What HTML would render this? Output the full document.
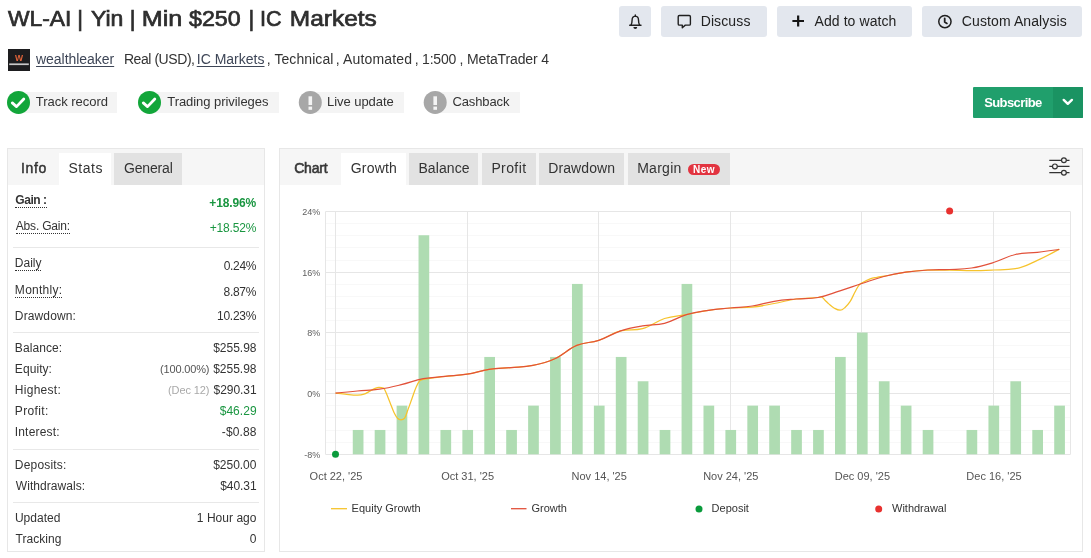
<!DOCTYPE html>
<html lang="en"><head><meta charset="utf-8"><title>WL-AI | Yin | Min $250 | IC Markets</title>
<style>
html,body{margin:0;padding:0;background:#fff;}
body{width:1091px;height:558px;position:relative;overflow:hidden;font-family:"Liberation Sans",sans-serif;}
.t{position:absolute;white-space:nowrap;}
.dot{padding-bottom:1px;border-bottom:1px dotted #333;}
.b{position:absolute;box-sizing:border-box;}
.btn{background:#e3e7ee;border-radius:3px;}
.panel{border:1px solid #e7e7e7;background:#fff;}
.hd{background:#f6f6f6;}
.tab{background:#e2e2e2;}
.lbl{background:#f4f4f4;}
.sep{background:#e8e8e8;height:1px;}
svg{position:absolute;left:0;top:0;}
</style></head><body>
<!-- top buttons -->
<div class="b btn" style="left:619px;top:6px;width:32px;height:31px;"></div>
<div class="b btn" style="left:661px;top:6px;width:106px;height:31px;"></div>
<div class="b btn" style="left:777px;top:6px;width:135px;height:31px;"></div>
<div class="b btn" style="left:922px;top:6px;width:160px;height:31px;"></div>
<div class="b" style="left:973px;top:87px;width:110px;height:31px;background:#209f6c;border-radius:1px;"></div>
<div class="b" style="left:1053px;top:87px;width:30px;height:31px;background:#1a9362;border-radius:0 1px 1px 0;"></div>
<!-- avatar -->
<div class="b" style="left:8px;top:49px;width:22px;height:22px;background:#1d1d1f;"></div>
<!-- badges labels -->
<div class="b lbl" style="left:18px;top:91.5px;width:99px;height:21.5px;"></div>
<div class="b lbl" style="left:149px;top:91.5px;width:129.7px;height:21.5px;"></div>
<div class="b lbl" style="left:310px;top:91.5px;width:93.7px;height:21.5px;"></div>
<div class="b lbl" style="left:435px;top:91.5px;width:84.5px;height:21.5px;"></div>
<!-- panels -->
<div class="b panel" style="left:7px;top:148px;width:258px;height:404px;"></div>
<div class="b hd" style="left:8px;top:149px;width:256px;height:35.7px;"></div>
<div class="b" style="left:58.7px;top:152.7px;width:52.3px;height:32.3px;background:#fff;"></div>
<div class="b tab" style="left:114px;top:152.7px;width:68px;height:32px;"></div>
<div class="b sep" style="left:13px;top:247px;width:246px;"></div>
<div class="b sep" style="left:13px;top:332px;width:246px;"></div>
<div class="b sep" style="left:13px;top:449px;width:246px;"></div>
<div class="b sep" style="left:13px;top:502px;width:246px;"></div>

<div class="b panel" style="left:279px;top:148px;width:804px;height:404px;"></div>
<div class="b hd" style="left:280px;top:149px;width:802px;height:35.7px;"></div>
<div class="b" style="left:341.3px;top:152.7px;width:64.7px;height:32.3px;background:#fff;"></div>
<div class="b tab" style="left:409px;top:152.7px;width:69.3px;height:32px;"></div>
<div class="b tab" style="left:482px;top:152.7px;width:53.5px;height:32px;"></div>
<div class="b tab" style="left:539.3px;top:152.7px;width:85.2px;height:32px;"></div>
<div class="b tab" style="left:628px;top:152.7px;width:101.8px;height:32px;"></div>
<div class="b" style="left:687.8px;top:164px;width:32.2px;height:11.2px;background:#e23440;border-radius:6px;"></div>

<svg width="1091" height="558" viewBox="0 0 1091 558">
<line x1="325.5" x2="1070.5" y1="211.50" y2="211.50" stroke="#e6e6e6" stroke-width="1"/>
<line x1="325.5" x2="1070.5" y1="223.50" y2="223.50" stroke="#f8f8f8" stroke-width="1"/>
<line x1="325.5" x2="1070.5" y1="235.50" y2="235.50" stroke="#f8f8f8" stroke-width="1"/>
<line x1="325.5" x2="1070.5" y1="247.50" y2="247.50" stroke="#f8f8f8" stroke-width="1"/>
<line x1="325.5" x2="1070.5" y1="260.50" y2="260.50" stroke="#f8f8f8" stroke-width="1"/>
<line x1="325.5" x2="1070.5" y1="272.50" y2="272.50" stroke="#e6e6e6" stroke-width="1"/>
<line x1="325.5" x2="1070.5" y1="284.50" y2="284.50" stroke="#f8f8f8" stroke-width="1"/>
<line x1="325.5" x2="1070.5" y1="296.50" y2="296.50" stroke="#f8f8f8" stroke-width="1"/>
<line x1="325.5" x2="1070.5" y1="308.50" y2="308.50" stroke="#f8f8f8" stroke-width="1"/>
<line x1="325.5" x2="1070.5" y1="320.50" y2="320.50" stroke="#f8f8f8" stroke-width="1"/>
<line x1="325.5" x2="1070.5" y1="332.50" y2="332.50" stroke="#e6e6e6" stroke-width="1"/>
<line x1="325.5" x2="1070.5" y1="345.50" y2="345.50" stroke="#f8f8f8" stroke-width="1"/>
<line x1="325.5" x2="1070.5" y1="357.50" y2="357.50" stroke="#f8f8f8" stroke-width="1"/>
<line x1="325.5" x2="1070.5" y1="369.50" y2="369.50" stroke="#f8f8f8" stroke-width="1"/>
<line x1="325.5" x2="1070.5" y1="381.50" y2="381.50" stroke="#f8f8f8" stroke-width="1"/>
<line x1="325.5" x2="1070.5" y1="393.50" y2="393.50" stroke="#e6e6e6" stroke-width="1"/>
<line x1="325.5" x2="1070.5" y1="405.50" y2="405.50" stroke="#f8f8f8" stroke-width="1"/>
<line x1="325.5" x2="1070.5" y1="417.50" y2="417.50" stroke="#f8f8f8" stroke-width="1"/>
<line x1="325.5" x2="1070.5" y1="430.50" y2="430.50" stroke="#f8f8f8" stroke-width="1"/>
<line x1="325.5" x2="1070.5" y1="442.50" y2="442.50" stroke="#f8f8f8" stroke-width="1"/>
<line x1="325.5" x2="1070.5" y1="454.50" y2="454.50" stroke="#e6e6e6" stroke-width="1"/>
<line x1="335.50" x2="335.50" y1="211.5" y2="454.3" stroke="#e6e6e6" stroke-width="1"/>
<line x1="467.50" x2="467.50" y1="211.5" y2="454.3" stroke="#e6e6e6" stroke-width="1"/>
<line x1="598.50" x2="598.50" y1="211.5" y2="454.3" stroke="#e6e6e6" stroke-width="1"/>
<line x1="730.50" x2="730.50" y1="211.5" y2="454.3" stroke="#e6e6e6" stroke-width="1"/>
<line x1="861.50" x2="861.50" y1="211.5" y2="454.3" stroke="#e6e6e6" stroke-width="1"/>
<line x1="993.50" x2="993.50" y1="211.5" y2="454.3" stroke="#e6e6e6" stroke-width="1"/>
<line x1="325.5" x2="325.5" y1="211.5" y2="454.3" stroke="#e6e6e6" stroke-width="1"/>
<line x1="1070.5" x2="1070.5" y1="211.5" y2="454.3" stroke="#e6e6e6" stroke-width="1"/>
<rect x="352.77" y="429.96" width="10.7" height="24.34" fill="#afdcb2"/>
<rect x="374.69" y="429.96" width="10.7" height="24.34" fill="#afdcb2"/>
<rect x="396.61" y="405.62" width="10.7" height="48.68" fill="#afdcb2"/>
<rect x="418.53" y="235.24" width="10.7" height="219.06" fill="#afdcb2"/>
<rect x="440.45" y="429.96" width="10.7" height="24.34" fill="#afdcb2"/>
<rect x="462.37" y="429.96" width="10.7" height="24.34" fill="#afdcb2"/>
<rect x="484.29" y="356.94" width="10.7" height="97.36" fill="#afdcb2"/>
<rect x="506.21" y="429.96" width="10.7" height="24.34" fill="#afdcb2"/>
<rect x="528.13" y="405.62" width="10.7" height="48.68" fill="#afdcb2"/>
<rect x="550.05" y="356.94" width="10.7" height="97.36" fill="#afdcb2"/>
<rect x="571.97" y="283.92" width="10.7" height="170.38" fill="#afdcb2"/>
<rect x="593.89" y="405.62" width="10.7" height="48.68" fill="#afdcb2"/>
<rect x="615.81" y="356.94" width="10.7" height="97.36" fill="#afdcb2"/>
<rect x="637.73" y="381.28" width="10.7" height="73.02" fill="#afdcb2"/>
<rect x="659.65" y="429.96" width="10.7" height="24.34" fill="#afdcb2"/>
<rect x="681.57" y="283.92" width="10.7" height="170.38" fill="#afdcb2"/>
<rect x="703.49" y="405.62" width="10.7" height="48.68" fill="#afdcb2"/>
<rect x="725.41" y="429.96" width="10.7" height="24.34" fill="#afdcb2"/>
<rect x="747.33" y="405.62" width="10.7" height="48.68" fill="#afdcb2"/>
<rect x="769.25" y="405.62" width="10.7" height="48.68" fill="#afdcb2"/>
<rect x="791.17" y="429.96" width="10.7" height="24.34" fill="#afdcb2"/>
<rect x="813.09" y="429.96" width="10.7" height="24.34" fill="#afdcb2"/>
<rect x="835.01" y="356.94" width="10.7" height="97.36" fill="#afdcb2"/>
<rect x="856.93" y="332.60" width="10.7" height="121.70" fill="#afdcb2"/>
<rect x="878.85" y="381.28" width="10.7" height="73.02" fill="#afdcb2"/>
<rect x="900.77" y="405.62" width="10.7" height="48.68" fill="#afdcb2"/>
<rect x="922.69" y="429.96" width="10.7" height="24.34" fill="#afdcb2"/>
<rect x="966.53" y="429.96" width="10.7" height="24.34" fill="#afdcb2"/>
<rect x="988.45" y="405.62" width="10.7" height="48.68" fill="#afdcb2"/>
<rect x="1010.37" y="381.28" width="10.7" height="73.02" fill="#afdcb2"/>
<rect x="1032.29" y="429.96" width="10.7" height="24.34" fill="#afdcb2"/>
<rect x="1054.21" y="405.62" width="10.7" height="48.68" fill="#afdcb2"/>
<path d="M335.50,393.20C335.50,393.20 341.20,393.87 345.00,394.20C350.04,394.63 352.56,395.10 357.60,395.10C360.16,395.10 361.44,394.99 364.00,394.20C366.00,393.59 367.00,392.66 369.00,391.60C371.00,390.54 372.00,389.76 374.00,388.90C376.00,388.04 377.00,387.30 379.00,387.30C380.80,387.30 381.70,387.30 383.50,388.00C384.50,388.70 385.00,390.27 386.00,392.50C387.60,396.07 388.40,398.50 390.00,402.50C391.60,406.50 392.40,409.13 394.00,412.50C395.40,415.45 396.10,416.84 397.50,418.30C398.90,419.76 399.60,419.80 401.00,419.80C402.40,419.80 403.10,419.80 404.50,418.30C405.90,416.80 406.60,413.20 408.00,409.50C409.60,405.28 410.40,402.90 412.00,398.50C413.60,394.10 414.40,391.23 416.00,387.50C417.40,384.23 418.10,382.60 419.50,381.00C420.99,379.40 421.74,379.67 423.23,379.40C432.01,377.83 436.39,377.44 445.16,376.40C453.94,375.36 458.32,375.60 467.10,374.20C475.87,372.80 480.26,370.72 489.03,369.40C497.80,368.08 502.19,368.40 510.96,367.60C519.74,366.80 524.12,367.18 532.90,365.40C541.67,363.62 546.06,362.70 554.83,358.70C563.60,354.70 567.99,349.06 576.76,345.40C585.54,341.74 589.92,343.30 598.70,340.40C607.47,337.50 611.86,333.20 620.63,330.90C629.40,328.60 633.79,330.90 642.56,328.60C651.34,326.30 655.72,321.30 664.50,318.50C673.27,315.70 677.65,316.24 686.43,314.60C695.20,312.96 699.59,311.62 708.36,310.30C717.13,308.98 721.52,308.62 730.29,308.00C739.07,307.38 743.45,308.00 752.23,307.20C761.00,306.40 765.39,305.14 774.16,303.50C782.93,301.86 787.32,300.20 796.09,299.00C804.87,297.80 809.25,298.27 818.03,297.50C819.34,297.39 819.99,296.80 821.30,296.80C822.78,296.80 823.52,298.80 825.00,300.20C826.52,301.64 827.28,302.58 828.80,303.90C830.88,305.70 831.92,306.84 834.00,308.00C836.44,309.36 837.66,310.20 840.10,310.20C842.06,310.20 843.04,309.21 845.00,307.50C847.08,305.69 848.12,304.62 850.20,301.40C852.12,298.42 853.08,295.55 855.00,292.00C856.56,289.11 857.34,287.26 858.90,285.30C860.34,283.50 861.06,283.43 862.50,282.60C865.58,280.83 867.12,279.93 870.20,278.80C872.92,277.81 874.28,277.81 877.00,277.30C879.88,276.77 881.32,276.71 884.20,276.20C892.82,274.67 897.13,273.43 905.76,272.20C914.53,270.95 918.92,270.00 927.69,270.00C936.46,270.00 940.85,270.00 949.62,270.00C958.40,270.00 962.78,270.60 971.56,270.60C980.33,270.60 984.72,270.38 993.49,270.00C1002.26,269.62 1006.65,270.00 1015.42,268.70C1024.20,267.40 1028.58,264.32 1037.36,260.40C1046.13,256.48 1059.29,249.10 1059.29,249.10" fill="none" stroke="#f6c32c" stroke-width="1.25"/>
<path d="M335.50,393.20C335.50,393.20 348.66,391.80 357.43,391.00C366.21,390.20 370.59,390.46 379.37,389.20C388.14,387.94 392.53,386.80 401.30,384.70C410.07,382.60 414.46,380.36 423.23,378.70C432.01,377.04 436.39,377.30 445.16,376.40C453.94,375.50 458.32,375.60 467.10,374.20C475.87,372.80 480.26,370.72 489.03,369.40C497.80,368.08 502.19,368.40 510.96,367.60C519.74,366.80 524.12,367.18 532.90,365.40C541.67,363.62 546.06,362.70 554.83,358.70C563.60,354.70 567.99,349.06 576.76,345.40C585.54,341.74 589.92,343.30 598.70,340.40C607.47,337.50 611.86,333.80 620.63,330.90C629.40,328.00 633.79,327.42 642.56,325.90C651.34,324.38 655.72,325.56 664.50,323.30C673.27,321.04 677.65,317.20 686.43,314.60C695.20,312.00 699.59,311.62 708.36,310.30C717.13,308.98 721.52,308.86 730.29,308.00C739.07,307.14 743.45,307.34 752.23,306.00C761.00,304.66 765.39,302.70 774.16,301.30C782.93,299.90 787.32,299.76 796.09,299.00C804.87,298.24 809.25,299.00 818.03,297.50C826.80,296.00 831.19,293.60 839.96,290.80C848.73,288.00 853.12,286.36 861.89,283.50C870.67,280.64 875.05,278.76 883.83,276.50C892.60,274.24 896.98,273.50 905.76,272.20C914.53,270.90 918.92,270.50 927.69,270.00C936.46,269.50 940.85,269.90 949.62,269.50C958.40,269.10 962.78,269.40 971.56,268.00C980.33,266.60 984.72,265.20 993.49,262.50C1002.26,259.80 1006.65,256.54 1015.42,254.50C1024.20,252.46 1028.58,253.30 1037.36,252.30C1046.13,251.30 1059.29,249.50 1059.29,249.50" fill="none" stroke="#e2513a" stroke-width="1.25"/>
<circle cx="335.5" cy="454.3" r="3.5" fill="#0a9b3c"/>
<circle cx="949.624" cy="211.0" r="3.5" fill="#e8312f"/>
<line x1="331" x2="347" y1="508.7" y2="508.7" stroke="#f6c32c" stroke-width="1.3"/>
<line x1="511" x2="526.5" y1="508.7" y2="508.7" stroke="#e2513a" stroke-width="1.3"/>
<circle cx="699" cy="509" r="3.5" fill="#0a9b3c"/>
<circle cx="878.7" cy="509" r="3.5" fill="#e8312f"/>
<!-- bell -->
<g fill="none" stroke="#1f1f1f" stroke-width="1.4" stroke-linecap="round" stroke-linejoin="round">
<path d="M629.7,25.2 H641.0 M630.9,25.2 C632.0,23.4 632.1,21.6 632.1,19.9 C632.1,17.7 633.3,16.3 635.3,16.1 C637.3,16.3 638.5,17.7 638.5,19.9 C638.5,21.6 638.6,23.4 639.7,25.2 M635.3,15.0 V16.0"/>
<path d="M633.4,27.0 H637.2 A1.9,1.9 0 0 1 633.4,27.0 Z" fill="#1f1f1f" stroke="none"/>
<!-- discuss bubble -->
<path d="M679.4,15.5 H689.2 Q690.4,15.5 690.4,16.7 V23.9 Q690.4,25.1 689.2,25.1 H685.3 L682.3,27.7 V25.1 H679.4 Q678.2,25.1 678.2,23.9 V16.7 Q678.2,15.5 679.4,15.5 Z"/>
<!-- clock -->
<circle cx="944.9" cy="21.55" r="6.15" stroke-width="1.5"/>
<path d="M944.7,18.3 V22.0 L946.9,23.4" stroke-width="1.8"/>
</g>
<!-- plus -->
<path d="M792.4,21.0 H804.0 M798.15,15.4 V26.6" stroke="#151515" stroke-width="2.2" fill="none"/>
<!-- chevron -->
<path d="M1063.7,99.9 L1067.8,103.8 L1071.9,99.9" stroke="#fff" stroke-width="2.4" fill="none" stroke-linecap="round" stroke-linejoin="round"/>
<!-- badges -->
<circle cx="18.5" cy="102.4" r="11.5" fill="#12a63a"/>
<path d="M12.3,102.9 L16.5,106.6 L23.8,99.0" stroke="#fff" stroke-width="2.8" fill="none" stroke-linecap="round" stroke-linejoin="round"/>
<circle cx="149.5" cy="102.4" r="11.5" fill="#12a63a"/>
<path d="M143.3,102.9 L147.5,106.6 L154.8,99.0" stroke="#fff" stroke-width="2.8" fill="none" stroke-linecap="round" stroke-linejoin="round"/>
<circle cx="310.3" cy="102.4" r="11.5" fill="#a7a7a7"/>
<rect x="308.5" y="96.3" width="3.6" height="8.7" fill="#f4f4f4"/><rect x="308.5" y="106.6" width="3.6" height="3.2" fill="#f4f4f4"/>
<circle cx="435.2" cy="102.4" r="11.5" fill="#a7a7a7"/>
<rect x="433.4" y="96.3" width="3.6" height="8.7" fill="#f4f4f4"/><rect x="433.4" y="106.6" width="3.6" height="3.2" fill="#f4f4f4"/>
<!-- settings icon -->
<g stroke="#333" stroke-width="1.2" fill="#f5f5f5">
<path d="M1049.3,160.3 H1069.5 M1049.3,166.4 H1069.5 M1049.3,172.7 H1069.5" fill="none"/>
<circle cx="1063.9" cy="160.3" r="2.4"/>
<circle cx="1054.9" cy="166.4" r="2.4"/>
<circle cx="1063.9" cy="172.7" r="2.4"/>
</g>
<!-- avatar details -->
<rect x="9.2" y="63.4" width="19.6" height="1.7" fill="#e8e8e8" opacity="0.85"/>

</svg>
<div id="tx" style="position:absolute;left:0;top:0;width:1091px;height:558px;will-change:transform;">
<span class="t" id="t0" style="font-size:22px;line-height:22px;top:8.00px;color:#2e2e2e;left:7.99px;transform-origin:0.06px 0;transform:scaleX(1.0379);-webkit-text-stroke:0.7px #2e2e2e;">WL-AI</span>
<span class="t" id="t1" style="font-size:22px;line-height:22px;top:8.00px;color:#2e2e2e;left:77.21px;-webkit-text-stroke:0.7px #2e2e2e;">|</span>
<span class="t" id="t2" style="font-size:22px;line-height:22px;top:8.00px;color:#2e2e2e;left:91.21px;transform-origin:0.44px 0;transform:scaleX(1.0472);-webkit-text-stroke:0.7px #2e2e2e;">Yin</span>
<span class="t" id="t3" style="font-size:22px;line-height:22px;top:8.00px;color:#2e2e2e;left:129.71px;-webkit-text-stroke:0.7px #2e2e2e;">|</span>
<span class="t" id="t4" style="font-size:22px;line-height:22px;top:8.00px;color:#2e2e2e;left:141.60px;transform-origin:1.75px 0;transform:scaleX(1.1442);-webkit-text-stroke:0.7px #2e2e2e;">Min</span>
<span class="t" id="t5" style="font-size:22px;line-height:22px;top:8.00px;color:#2e2e2e;left:189.36px;transform-origin:0.19px 0;transform:scaleX(1.0555);-webkit-text-stroke:0.7px #2e2e2e;">$250</span>
<span class="t" id="t6" style="font-size:22px;line-height:22px;top:8.00px;color:#2e2e2e;left:248.61px;-webkit-text-stroke:0.7px #2e2e2e;">|</span>
<span class="t" id="t7" style="font-size:22px;line-height:22px;top:8.00px;color:#2e2e2e;left:260.25px;transform-origin:2.00px 0;transform:scaleX(0.9798);-webkit-text-stroke:0.7px #2e2e2e;">IC</span>
<span class="t" id="t8" style="font-size:22px;line-height:22px;top:8.00px;color:#2e2e2e;left:289.50px;transform-origin:1.75px 0;transform:scaleX(1.1116);-webkit-text-stroke:0.7px #2e2e2e;">Markets</span>
<span class="t" id="t9" style="font-size:14px;line-height:14px;top:52.01px;color:#3e4657;letter-spacing:-0.040px;left:36.06px;text-decoration:underline;text-underline-offset:2px;">wealthleaker</span>
<span class="t" id="t10" style="font-size:14px;line-height:14px;top:52.01px;color:#333;letter-spacing:-0.433px;left:123.88px;">Real (USD),</span>
<span class="t" id="t11" style="font-size:14px;line-height:14px;top:52.01px;color:#3e4657;letter-spacing:0.007px;left:196.75px;text-decoration:underline;text-underline-offset:2px;">IC Markets</span>
<span class="t" id="t12" style="font-size:14px;line-height:14px;top:52.01px;color:#333;letter-spacing:0.075px;left:266.75px;">, Technical</span>
<span class="t" id="t13" style="font-size:14px;line-height:14px;top:52.01px;color:#333;letter-spacing:0.158px;left:335.75px;">, Automated</span>
<span class="t" id="t14" style="font-size:14px;line-height:14px;top:52.01px;color:#333;letter-spacing:-0.217px;left:414.75px;">, 1:500</span>
<span class="t" id="t15" style="font-size:14px;line-height:14px;top:52.01px;color:#333;letter-spacing:-0.130px;left:459.45px;">, MetaTrader 4</span>
<span class="t" id="t16" style="font-size:8.5px;line-height:8.5px;top:54.01px;color:#e2643a;font-weight:700;left:18.90px;transform:translateX(-50%);">W</span>
<span class="t" id="t17" style="font-size:13px;line-height:13px;top:95.00px;color:#333;letter-spacing:-0.013px;left:35.75px;">Track record</span>
<span class="t" id="t18" style="font-size:13px;line-height:13px;top:95.00px;color:#333;letter-spacing:-0.055px;left:167.25px;">Trading privileges</span>
<span class="t" id="t19" style="font-size:13px;line-height:13px;top:95.00px;color:#333;letter-spacing:-0.042px;left:326.94px;">Live update</span>
<span class="t" id="t20" style="font-size:13px;line-height:13px;top:95.00px;color:#333;letter-spacing:-0.107px;left:452.38px;">Cashback</span>
<span class="t" id="t21" style="font-size:14px;line-height:14px;top:14.00px;color:#222;letter-spacing:0.121px;left:700.67px;">Discuss</span>
<span class="t" id="t22" style="font-size:14px;line-height:14px;top:14.00px;color:#222;letter-spacing:0.085px;left:814.50px;">Add to watch</span>
<span class="t" id="t23" style="font-size:14px;line-height:14px;top:14.00px;color:#222;letter-spacing:0.106px;left:961.81px;">Custom Analysis</span>
<span class="t" id="t24" style="font-size:13px;line-height:13px;top:96.00px;color:#fff;font-weight:700;letter-spacing:-0.608px;left:984.23px;">Subscribe</span>
<span class="t" id="t25" style="font-size:14px;line-height:14px;top:161.01px;color:#333;letter-spacing:0.679px;left:20.95px;-webkit-text-stroke:0.45px #333;">Info</span>
<span class="t" id="t26" style="font-size:14px;line-height:14px;top:161.01px;color:#333;letter-spacing:0.562px;left:68.38px;">Stats</span>
<span class="t" id="t27" style="font-size:14px;line-height:14px;top:161.01px;color:#333;letter-spacing:-0.165px;left:124.01px;">General</span>
<span class="t" id="t28" style="font-size:14px;line-height:14px;top:161.01px;color:#383838;letter-spacing:-0.200px;left:294.21px;-webkit-text-stroke:0.6px #383838;">Chart</span>
<span class="t" id="t29" style="font-size:14px;line-height:14px;top:161.01px;color:#333;letter-spacing:0.188px;left:350.81px;">Growth</span>
<span class="t" id="t30" style="font-size:14px;line-height:14px;top:161.01px;color:#333;letter-spacing:0.104px;left:418.38px;">Balance</span>
<span class="t" id="t31" style="font-size:14px;line-height:14px;top:161.01px;color:#333;letter-spacing:0.400px;left:491.38px;">Profit</span>
<span class="t" id="t32" style="font-size:14px;line-height:14px;top:161.01px;color:#333;letter-spacing:0.116px;left:548.17px;">Drawdown</span>
<span class="t" id="t33" style="font-size:14px;line-height:14px;top:161.01px;color:#333;letter-spacing:0.278px;left:637.17px;">Margin</span>
<span class="t" id="t34" style="font-size:10px;line-height:10px;top:165.02px;color:#fff;font-weight:700;letter-spacing:0.600px;left:692.88px;">New</span>
<span class="t dot" id="t35" style="font-size:12px;line-height:12px;top:194.02px;color:#333;font-weight:700;letter-spacing:-0.467px;left:15.36px;">Gain :</span>
<span class="t" id="t36" style="font-size:12px;line-height:12px;top:197.00px;color:#1a9641;font-weight:700;letter-spacing:-0.123px;right:834.84px;">+18.96%</span>
<span class="t dot" id="t37" style="font-size:12px;line-height:12px;top:220.00px;color:#333;letter-spacing:-0.193px;left:15.80px;">Abs. Gain:</span>
<span class="t" id="t38" style="font-size:12px;line-height:12px;top:222.01px;color:#1a9641;letter-spacing:-0.175px;right:834.77px;">+18.52%</span>
<span class="t dot" id="t39" style="font-size:12px;line-height:12px;top:257.01px;color:#333;letter-spacing:-0.037px;left:14.86px;">Daily</span>
<span class="t" id="t40" style="font-size:12px;line-height:12px;top:260.01px;color:#333;letter-spacing:-0.322px;right:834.92px;">0.24%</span>
<span class="t dot" id="t41" style="font-size:12px;line-height:12px;top:284.01px;color:#333;letter-spacing:0.270px;left:14.86px;">Monthly:</span>
<span class="t" id="t42" style="font-size:12px;line-height:12px;top:286.01px;color:#333;letter-spacing:-0.306px;right:834.90px;">8.87%</span>
<span class="t" id="t43" style="font-size:12px;line-height:12px;top:310.01px;color:#333;letter-spacing:0.125px;left:14.86px;">Drawdown:</span>
<span class="t" id="t44" style="font-size:12px;line-height:12px;top:310.01px;color:#333;letter-spacing:-0.235px;right:834.78px;">10.23%</span>
<span class="t" id="t45" style="font-size:12px;line-height:12px;top:342.01px;color:#333;letter-spacing:0.073px;left:14.86px;">Balance:</span>
<span class="t" id="t46" style="font-size:12px;line-height:12px;top:342.01px;color:#333;letter-spacing:-0.008px;right:834.49px;">$255.98</span>
<span class="t" id="t47" style="font-size:12px;line-height:12px;top:363.01px;color:#333;letter-spacing:0.069px;left:14.86px;">Equity:</span>
<span class="t" id="t48" style="font-size:12px;line-height:12px;top:363.01px;color:#333;letter-spacing:-0.008px;right:834.49px;">$255.98</span>
<span class="t" id="t49" style="font-size:12px;line-height:12px;top:384.01px;color:#333;letter-spacing:0.271px;left:14.86px;">Highest:</span>
<span class="t" id="t50" style="font-size:12px;line-height:12px;top:384.01px;color:#333;letter-spacing:-0.065px;right:834.49px;">$290.31</span>
<span class="t" id="t51" style="font-size:12px;line-height:12px;top:405.01px;color:#333;letter-spacing:0.348px;left:14.86px;">Profit:</span>
<span class="t" id="t52" style="font-size:12px;line-height:12px;top:405.01px;color:#1a9641;letter-spacing:0.040px;right:834.38px;">$46.29</span>
<span class="t" id="t53" style="font-size:12px;line-height:12px;top:426.01px;color:#333;letter-spacing:0.189px;left:14.74px;">Interest:</span>
<span class="t" id="t54" style="font-size:12px;line-height:12px;top:426.01px;color:#333;letter-spacing:0.128px;right:834.40px;">-$0.88</span>
<span class="t" id="t55" style="font-size:12px;line-height:12px;top:459.01px;color:#333;letter-spacing:0.175px;left:14.86px;">Deposits:</span>
<span class="t" id="t56" style="font-size:12px;line-height:12px;top:459.01px;color:#333;letter-spacing:-0.019px;right:834.57px;">$250.00</span>
<span class="t" id="t57" style="font-size:12px;line-height:12px;top:480.01px;color:#333;letter-spacing:0.061px;left:15.80px;">Withdrawals:</span>
<span class="t" id="t58" style="font-size:12px;line-height:12px;top:480.01px;color:#333;letter-spacing:-0.080px;right:834.50px;">$40.31</span>
<span class="t" id="t59" style="font-size:12px;line-height:12px;top:512.01px;color:#333;letter-spacing:0.025px;left:14.93px;">Updated</span>
<span class="t" id="t60" style="font-size:12px;line-height:12px;top:512.01px;color:#333;letter-spacing:0.033px;right:834.47px;">1 Hour ago</span>
<span class="t" id="t61" style="font-size:12px;line-height:12px;top:533.01px;color:#333;letter-spacing:0.048px;left:15.55px;">Tracking</span>
<span class="t" id="t62" style="font-size:12px;line-height:12px;top:533.01px;color:#333;right:834.56px;">0</span>
<span class="t" id="t63" style="font-size:11px;line-height:11px;top:364.00px;color:#555;letter-spacing:-0.155px;right:881.65px;">(100.00%)</span>
<span class="t" id="t64" style="font-size:11px;line-height:11px;top:385.00px;color:#a9a9a9;letter-spacing:-0.096px;right:881.61px;">(Dec 12)</span>
<span class="t" id="t65" style="font-size:9px;line-height:9px;top:208.01px;color:#606060;right:770.67px;">24%</span>
<span class="t" id="t66" style="font-size:9px;line-height:9px;top:269.00px;color:#606060;right:770.67px;">16%</span>
<span class="t" id="t67" style="font-size:9px;line-height:9px;top:329.02px;color:#606060;right:770.67px;">8%</span>
<span class="t" id="t68" style="font-size:9px;line-height:9px;top:390.01px;color:#606060;right:770.67px;">0%</span>
<span class="t" id="t69" style="font-size:9px;line-height:9px;top:451.01px;color:#606060;right:770.67px;">-8%</span>
<span class="t" id="t70" style="font-size:11px;line-height:11px;top:471.00px;color:#555;left:336.00px;transform:translateX(-50%);">Oct 22, '25</span>
<span class="t" id="t71" style="font-size:11px;line-height:11px;top:471.00px;color:#555;left:467.60px;transform:translateX(-50%);">Oct 31, '25</span>
<span class="t" id="t72" style="font-size:11px;line-height:11px;top:471.00px;color:#555;left:599.20px;transform:translateX(-50%);">Nov 14, '25</span>
<span class="t" id="t73" style="font-size:11px;line-height:11px;top:471.00px;color:#555;left:730.79px;transform:translateX(-50%);">Nov 24, '25</span>
<span class="t" id="t74" style="font-size:11px;line-height:11px;top:471.00px;color:#555;left:862.39px;transform:translateX(-50%);">Dec 09, '25</span>
<span class="t" id="t75" style="font-size:11px;line-height:11px;top:471.00px;color:#555;left:993.99px;transform:translateX(-50%);">Dec 16, '25</span>
<span class="t" id="t76" style="font-size:11px;line-height:11px;top:503.00px;color:#333;left:351.62px;">Equity Growth</span>
<span class="t" id="t77" style="font-size:11px;line-height:11px;top:503.00px;color:#333;left:531.50px;">Growth</span>
<span class="t" id="t78" style="font-size:11px;line-height:11px;top:503.00px;color:#333;left:711.62px;">Deposit</span>
<span class="t" id="t79" style="font-size:11px;line-height:11px;top:503.00px;color:#333;left:892.00px;">Withdrawal</span>
</div>
</body></html>
